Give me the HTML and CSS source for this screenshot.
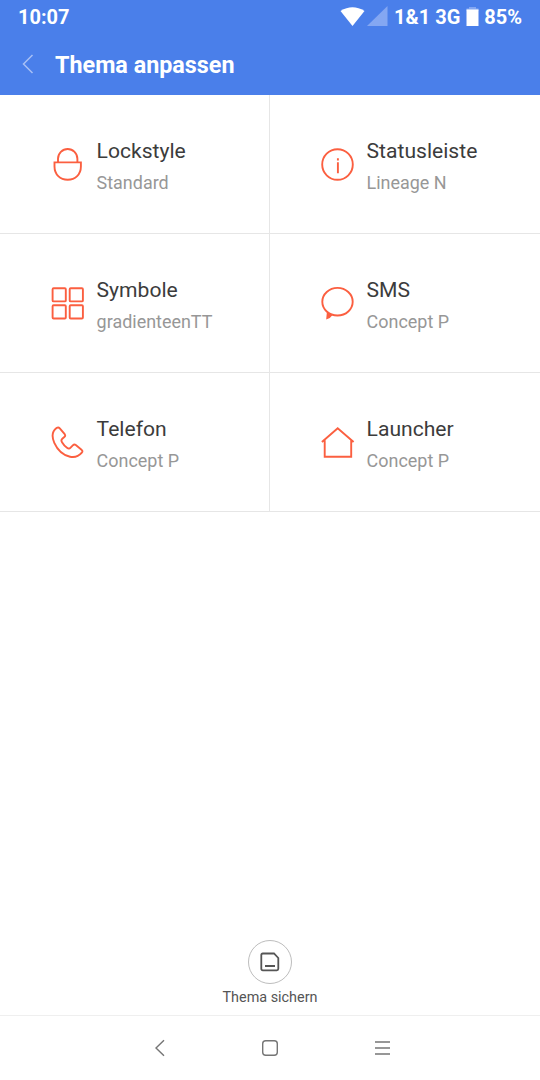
FILE: index.html
```html
<!DOCTYPE html>
<html lang="de">
<head>
<meta charset="utf-8">
<title>Thema anpassen</title>
<link rel="stylesheet" href="styles.css">
</head>
<body>
<header class="top">
  <div class="status">
    <span class="clock">10:07</span>
    <svg class="wifi" width="26" height="22" viewBox="0 0 26 22"><path d="M.5 5Q12.500-2.500 24.500 5L12.500 20Z" fill="#fff"/></svg>
    <svg class="signal" width="22" height="22" viewBox="0 0 22 22"><path d="M0 20L20.500 0V20Z" fill="#84a7f2"/></svg>
    <span class="carrier">1&amp;1 3G</span>
    <svg class="battery" width="13" height="20" viewBox="0 0 13 20"><path d="M3 0h7v1.500h2.500V4H.5V1.500H3Z" fill="#84a7f2"/><path d="M.5 2.500h12v16.500H.5Z" fill="#fff"/></svg>
    <span class="percent">85%</span>
  </div>
  <div class="title-bar">
    <svg class="back" width="12" height="20" viewBox="0 0 12 20"><path d="M10.500 1L1.500 10l9 9"/></svg>
    <h1 class="title">Thema anpassen</h1>
  </div>
</header>
<main class="grid">
  <section class="cell">
    <svg class="icon" viewBox="0 0 36 36"><path d="M8 15V11.700A9.700 9.700 0 0 1 27.400 11.700V15M4.500 15.400H30.900V19.500C30.900 27.500 25.300 32.700 17.700 32.700S4.500 27.500 4.500 19.500Z"/></svg>
    <div class="label"><div class="name">Lockstyle</div><div class="value">Standard</div></div>
  </section>
  <section class="cell">
    <svg class="icon" viewBox="0 0 36 36"><circle cx="17.500" cy="17.500" r="15.300"/><path d="M17.900 15.200V26.200M17.900 11.200v2.400"/></svg>
    <div class="label"><div class="name">Statusleiste</div><div class="value">Lineage N</div></div>
  </section>
  <section class="cell">
    <svg class="icon" viewBox="0 0 36 36"><rect x="2.600" y="2.200" width="13.200" height="13.200" rx="1"/><rect x="19.700" y="2.200" width="13.200" height="13.200" rx="1"/><rect x="2.600" y="19.300" width="13.200" height="13.200" rx="1"/><rect x="19.700" y="19.300" width="13.200" height="13.200" rx="1"/></svg>
    <div class="label"><div class="name">Symbole</div><div class="value">gradienteenTT</div></div>
  </section>
  <section class="cell">
    <svg class="icon" viewBox="0 0 36 36"><ellipse cx="17.500" cy="15.700" rx="15.200" ry="13.800"/><path class="solid" d="M7 25L6.200 33.500Q10.500 32.500 12.500 29Z"/></svg>
    <div class="label"><div class="name">SMS</div><div class="value">Concept P</div></div>
  </section>
  <section class="cell">
    <svg class="icon" viewBox="0 0 36 36"><path d="M6.500 3.100Q8.300 1.700 9.800 3.300L14.700 9.200Q15.800 10.700 14.300 12L12.300 13.800Q10.700 15.300 12 17.200Q14 20.600 17 22.700Q19 24.400 20.600 22.700L22.800 20.400Q24.300 18.900 25.800 20L31.500 24.700Q33.200 26 31.800 27.700Q27 33.300 20 31.700Q9.500 29.300 4.300 17.800Q0 8 6.500 3.100Z"/></svg>
    <div class="label"><div class="name">Telefon</div><div class="value">Concept P</div></div>
  </section>
  <section class="cell">
    <svg class="icon" viewBox="0 0 36 36"><path d="M1.900 17L17.700 3.300L33.600 17M4.700 15V31.800H31.200V15"/></svg>
    <div class="label"><div class="name">Launcher</div><div class="value">Concept P</div></div>
  </section>
</main>
<footer class="save">
  <div class="save-button"><svg width="20" height="20" viewBox="0 0 20 20"><path d="M2.800 1.500H14L18.300 6V16.800Q18.300 18.300 16.800 18.300H2.800Q1.300 18.300 1.300 16.800V3Q1.300 1.500 2.800 1.500ZM5 14H15"/></svg></div>
  <div class="save-text">Thema sichern</div>
</footer>
<nav class="nav">
  <svg class="nav-back" width="12" height="18" viewBox="0 0 12 18"><path d="M11 1.200L3 9l8 7.800"/></svg>
  <svg class="nav-home" width="18" height="18" viewBox="0 0 18 18"><rect x="1.700" y="1.700" width="14.600" height="14.600" rx="3"/></svg>
  <svg class="nav-menu" width="16" height="18" viewBox="0 0 16 18"><path d="M0 3H15M0 9H15M0 15H15"/></svg>
</nav>
</body>
</html>
```
FILE: styles.css
```css
* { box-sizing: border-box; }
body {
  margin: 0;
  width: 540px;
  height: 1080px;
  display: flex;
  flex-direction: column;
  background: #fff;
  font-family: Roboto, "Liberation Sans", sans-serif;
}
svg { display: block; flex: none; fill: none; }
.top { height: 95px; background: #4a7fea; color: #fff; }
.status {
  height: 34px;
  padding: 0 18px;
  display: flex;
  align-items: center;
  font-size: 20px;
  font-weight: 700;
  white-space: nowrap;
}
.clock { margin-right: auto; }
.signal { margin-left: 1px; }
.carrier { margin-left: 5px; }
.battery { margin: 0 5px 0 6px; }
.title-bar { height: 61px; padding: 0 0 1px 22px; display: flex; align-items: center; }
.back { stroke: #a8c0f5; stroke-width: 1.5; }
.title { margin: 0 0 0 21px; padding-top: 2px; font-size: 23.350px; line-height: 60px; font-weight: 700; }
.grid { display: grid; grid-template-columns: 270px 270px; grid-auto-rows: 139px; }
.cell {
  display: flex;
  align-items: flex-start;
  padding: 41px 0 0 50px;
  border-right: 1px solid #e6e6e6;
  border-bottom: 1px solid #e6e6e6;
}
.cell:nth-child(even) { border-right: 0; }
.icon { width: 36px; height: 36px; margin: 11px 10.600px 0 0; stroke: #fb5f40; stroke-width: 1.9; }
.solid { fill: #fb5f40; stroke: none; }
.name { font-size: 21.100px; line-height: 30px; color: #3c3c3c; }
.value { font-size: 17.950px; line-height: 34px; color: #979797; }
.save { margin-top: auto; height: 75.500px; display: flex; flex-direction: column; align-items: center; }
.save-button {
  width: 44px;
  height: 44px;
  border: 1px solid #bdbdbd;
  border-radius: 50%;
  display: grid;
  place-items: center;
  stroke: #555;
  stroke-width: 1.8;
}
.save-text { font-size: 14.400px; line-height: 28px; color: #555; }
.nav {
  height: 65px;
  border-top: 1px solid #efefef;
  display: flex;
  align-items: center;
  padding: 0 0 1px 153px;
  stroke: #757575;
  stroke-width: 1.4;
}
.nav-home { margin-left: 96px; }
.nav-menu { margin-left: 96px; }
```
